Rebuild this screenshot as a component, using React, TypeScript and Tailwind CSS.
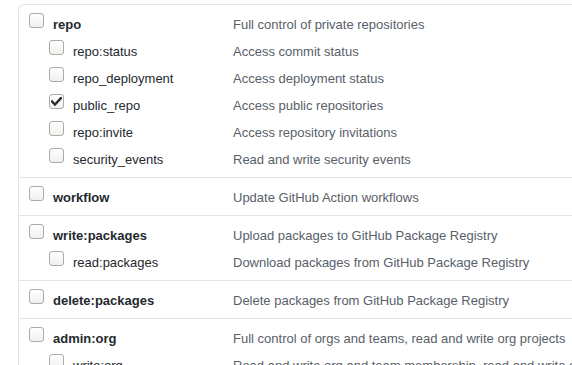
import React from "react";

type Scope = { name: string; desc: string; checked?: boolean };
type Group = { top: Scope; subs: Scope[] };

const groups: Group[] = [
  {
    top: { name: "repo", desc: "Full control of private repositories" },
    subs: [
      { name: "repo:status", desc: "Access commit status" },
      { name: "repo_deployment", desc: "Access deployment status" },
      { name: "public_repo", desc: "Access public repositories", checked: true },
      { name: "repo:invite", desc: "Access repository invitations" },
      { name: "security_events", desc: "Read and write security events" },
    ],
  },
  { top: { name: "workflow", desc: "Update GitHub Action workflows" }, subs: [] },
  {
    top: { name: "write:packages", desc: "Upload packages to GitHub Package Registry" },
    subs: [{ name: "read:packages", desc: "Download packages from GitHub Package Registry" }],
  },
  { top: { name: "delete:packages", desc: "Delete packages from GitHub Package Registry" }, subs: [] },
  {
    top: { name: "admin:org", desc: "Full control of orgs and teams, read and write org projects" },
    subs: [{ name: "write:org", desc: "Read and write org and team membership, read and write org projects" }],
  },
];

function Checkbox({ checked }: { checked?: boolean }) {
  return (
    <div className="mt-[3px] flex h-[15px] w-[15px] shrink-0 items-center justify-center rounded-[3px] border border-[#aeaaa5] bg-gradient-to-b from-white to-[#f1f0ef]">
      {checked && (
        <svg width="11" height="9" viewBox="0 0 11 9">
          <path d="M1 4.5 L4 7.5 L10 1" fill="none" stroke="#2b2b2b" strokeWidth="2.4" strokeLinecap="square" />
        </svg>
      )}
    </div>
  );
}

function Row({ scope, sub }: { scope: Scope; sub?: boolean }) {
  return (
    <div className="flex h-[27px] items-start pl-[10px] leading-[27px]">
      <div className={`flex w-[204px] shrink-0 items-start gap-[9px] ${sub ? "pl-[20px]" : ""}`}>
        <Checkbox checked={scope.checked} />
        <span className={`mt-[1px] text-[#24292e] ${sub ? "" : "font-bold"}`}>{scope.name}</span>
      </div>
      <span className="mt-[1px] whitespace-nowrap text-[#586069]">{scope.desc}</span>
    </div>
  );
}

export default function App() {
  return (
    <div className="h-[365px] w-[572px] overflow-hidden bg-white pl-[18px] pt-[4px] font-['Liberation_Sans',Arial,sans-serif] text-[13px]">
      <div className="w-[640px] rounded-tl-[6px] border-l border-t border-[#e1e4e8]">
        {groups.map((g) => (
          <div key={g.top.name} className="border-b border-[#e1e4e8] pb-[5px] pt-[5px]">
            <Row scope={g.top} />
            {g.subs.map((s) => (
              <Row key={s.name} scope={s} sub />
            ))}
          </div>
        ))}
      </div>
    </div>
  );
}
